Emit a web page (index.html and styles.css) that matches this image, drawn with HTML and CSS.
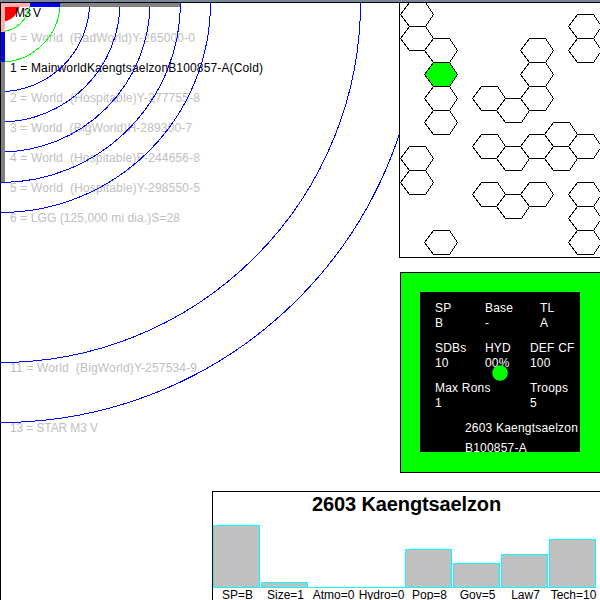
FILE: index.html
```html
<!DOCTYPE html>
<html lang="en">
<head>
<meta charset="utf-8">
<title>2603 Kaengtsaelzon</title>
<link rel="stylesheet" href="styles.css">
</head>
<body>
<main class="window">
  <svg class="orbits" viewBox="0 0 399 600" width="399" height="600">
    <circle class="star" cx="0" cy="2" r="20"/>
    <g class="labels">
      <text class="dark" x="15" y="17" textLength="26">M3 V</text>
      <text x="10" y="42" textLength="185">0 = World&#160; (RadWorld)Y-265000-0</text>
      <text class="dark" x="10" y="72" textLength="253">1 = MainworldKaengtsaelzonB100857-A(Cold)</text>
      <text x="10" y="102" textLength="190">2 = World&#160; (Hospitable)Y-277755-8</text>
      <text x="10" y="132" textLength="182">3 = World&#160; (BigWorld)H-289300-7</text>
      <text x="10" y="162" textLength="190">4 = World&#160; (Hospitable)F-244656-8</text>
      <text x="10" y="192" textLength="190">5 = World&#160; (Hospitable)Y-298550-5</text>
      <text x="10" y="222" textLength="170">6 = LGG (125,000 mi dia.)S=28</text>
      <text x="10" y="372" textLength="187">11 = World&#160; (BigWorld)Y-257534-9</text>
      <text x="10" y="432" textLength="88">13 = STAR M3 V</text>
    </g>
    <g class="rings">
      <circle class="inner" cx="0.5" cy="2.5" r="29"/>
      <circle class="inner" cx="0.5" cy="2.5" r="59.5"/>
      <circle cx="0.5" cy="2.5" r="89"/>
      <circle cx="0.5" cy="2.5" r="119.5"/>
      <circle cx="0.5" cy="2.5" r="149.5"/>
      <circle cx="0.5" cy="2.5" r="180"/>
      <circle cx="0.5" cy="2.5" r="210"/>
      <circle cx="0.5" cy="2.5" r="360"/>
      <circle cx="0.5" cy="2.5" r="420"/>
    </g>
    <g class="scale">
      <path class="outer" d="M0 3H180V7H5V182H0Z"/>
      <path class="zone" d="M0 3H60V7H5V62H0Z"/>
      <path class="near" d="M0 3H30V7H5V32H0Z"/>
    </g>
    <path class="frame" d="M0 2H399V3H1V600H0Z"/>
    <path class="titlebar" d="M0 0H399V2H0Z"/>
  </svg>

  <div class="side">
    <svg class="map" viewBox="399 0 201 258" width="201" height="258">
      <defs><path id="hex" d="M0 12L9 0H25L33 12L25 24H9Z"/></defs>
      <g class="hexes">
        <use href="#hex" x="400.5" y="2.5"/><use href="#hex" x="400.5" y="26.5"/>
        <use href="#hex" x="424.5" y="38.5"/><use href="#hex" x="424.5" y="62.5" class="current"/>
        <use href="#hex" x="424.5" y="86.5"/><use href="#hex" x="424.5" y="110.5"/>
        <use href="#hex" x="400.5" y="146.5"/><use href="#hex" x="400.5" y="170.5"/>
        <use href="#hex" x="424.5" y="230.5"/>
        <use href="#hex" x="472.5" y="86.5"/><use href="#hex" x="496.5" y="98.5"/>
        <use href="#hex" x="520.5" y="38.5"/><use href="#hex" x="520.5" y="62.5"/><use href="#hex" x="520.5" y="86.5"/>
        <use href="#hex" x="568.5" y="14.5"/><use href="#hex" x="568.5" y="38.5"/>
        <use href="#hex" x="472.5" y="134.5"/><use href="#hex" x="496.5" y="146.5"/>
        <use href="#hex" x="520.5" y="134.5"/><use href="#hex" x="544.5" y="122.5"/>
        <use href="#hex" x="544.5" y="146.5"/><use href="#hex" x="568.5" y="134.5"/>
        <use href="#hex" x="472.5" y="182.5"/><use href="#hex" x="496.5" y="194.5"/><use href="#hex" x="520.5" y="182.5"/>
        <use href="#hex" x="568.5" y="182.5"/><use href="#hex" x="568.5" y="206.5"/><use href="#hex" x="568.5" y="230.5"/>
      </g>
      <path class="frame" d="M399 2H600V3H400V257H600V258H399Z"/>
      <path class="titlebar" d="M399 0H600V2H399Z"/>
    </svg>

    <section class="defense">
      <div class="card">
        <div class="row top"><span>SP<br>B</span><span>Base<br>-</span><span class="tl">TL<br>A</span></div>
        <div class="row"><span>SDBs<br>10</span><span>HYD<br>00%</span><span>DEF CF<br>100</span></div>
        <div class="row"><span class="wide">Max Rons<br>1</span><span>Troops<br>5</span></div>
        <div class="name">2603 Kaengtsaelzon</div>
        <div class="code">B100857-A</div>
        <svg class="world" viewBox="0 0 16 16"><circle cx="8" cy="8" r="7.8"/></svg>
      </div>
    </section>
  </div>

  <section class="profile">
    <h1>2603 Kaengtsaelzon</h1>
    <div class="bars">
      <div class="bar sp"></div><div class="bar size"></div><div class="bar atmo"></div><div class="bar hydro"></div>
      <div class="bar pop"></div><div class="bar gov"></div><div class="bar law"></div><div class="bar tech"></div>
    </div>
    <div class="axis">
      <span>SP=B</span><span>Size=1</span><span>Atmo=0</span><span>Hydro=0</span>
      <span>Pop=8</span><span>Gov=5</span><span>Law7</span><span>Tech=10</span>
    </div>
  </section>
</main>
</body>
</html>
```
FILE: styles.css
```css
* { box-sizing: border-box; }
body { margin: 0; background: #fff; color: #000; font: 12px/15px "Liberation Sans", Arial, sans-serif; overflow: hidden; }
.window { width: 600px; height: 600px; display: grid; grid-template-columns: 399px 201px; grid-template-rows: 491px 109px; overflow: hidden; }
svg { display: block; }
.orbits { grid-column: 1; grid-row: 1 / 3; }
.labels { font-size: 12px; fill: #c0c0c0; }
.labels .dark { fill: #000; }
.star { fill: #f00; }
.rings { fill: none; stroke: #00f; stroke-width: 1; shape-rendering: crispEdges; }
.rings .inner { stroke: #0f0; }
.scale .outer { fill: #808080; }
.scale .zone { fill: #00f; }
.scale .near { fill: #ffafaf; }
.frame { fill: #000; }
.titlebar { fill: #778899; }

.side { grid-column: 2; grid-row: 1; }
.hexes { fill: #fff; stroke: #000; stroke-width: 1; shape-rendering: crispEdges; }
.hexes .current { fill: #0f0; }

.defense { margin: 14px 0 0 1px; width: 200px; height: 201px; padding: 19px 19px 20px; background: #0f0; border: 1px solid #000; border-right: 0; }
.card { position: relative; width: 160px; height: 160px; padding: 9px 0 0 15px; background: #000; color: #fff; overflow: hidden; letter-spacing: 0.2px; white-space: nowrap; }
.row { display: grid; grid-template-columns: 50px 45px 50px; height: 40px; }
.row.top .tl { padding-left: 10px; }
.wide { grid-column: span 2; }
.name, .code { padding-left: 30px; height: 20px; }
.world { position: absolute; left: 72px; top: 73px; width: 16px; height: 16px; fill: #0f0; }

.profile { grid-column: 1 / 3; grid-row: 2; position: relative; margin-left: 212px; border: 1px solid #000; border-width: 1px 0 0 1px; background: #fff; }
.profile h1 { margin: 0; height: 33px; padding: 1px 0 0 99px; font-size: 20px; line-height: 23px; font-weight: bold; letter-spacing: -0.12px; white-space: nowrap; }
.bars { display: grid; grid-template-columns: repeat(8, 48px); align-items: end; height: 63px; }
.bar { width: 47px; background: #c0c0c0; border: 1px solid #0ff; }
.sp { height: 63px; }
.size { height: 6px; }
.atmo, .hydro { height: 1px; border-bottom: 0; }
.pop { height: 39px; }
.gov { height: 25px; }
.law { height: 34px; }
.tech { height: 49px; }
.axis { display: grid; grid-template-columns: repeat(8, 48px); text-align: center; white-space: nowrap; line-height: 14px; }
.axis span { width: 49px; }
```
